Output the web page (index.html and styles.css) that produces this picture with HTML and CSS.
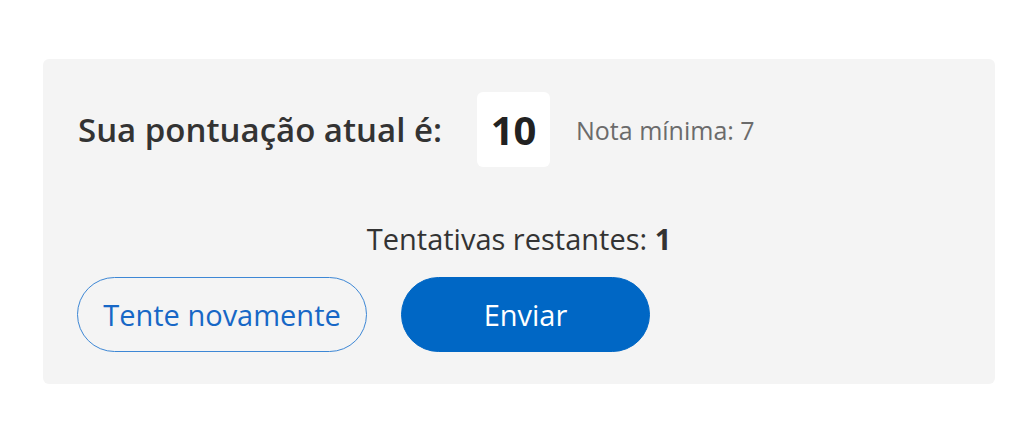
FILE: index.html
```html
<!DOCTYPE html>
<html lang="pt-BR">

<head>
    <meta charset="UTF-8">
    <meta name="viewport" content="width=device-width, initial-scale=1.0">
    <title>Resultado</title>
    <link rel="stylesheet" href="styles.css">
</head>

<body>
    <div class="result-panel">
        <div class="score-row">
            <span class="score-label">Sua pontuação atual é:</span>
            <span class="score-box">10</span>
            <span class="min-score">Nota mínima: 7</span>
        </div>

        <p class="attempts">Tentativas restantes: <strong>1</strong></p>

        <div class="actions">
            <button type="button" class="btn btn-outline">Tente novamente</button>
            <button type="submit" class="btn btn-primary">Enviar</button>
        </div>
    </div>
</body>

</html>
```

FILE: styles.css
```css
body {
    margin: 59px 36px 0 43px;
    font-family: "Open Sans", "Noto Sans", sans-serif;
    background-color: #ffffff;
    color: #333333;
}

.result-panel {
    background-color: #f4f4f4;
    border-radius: 6px;
    padding: 33px 34px 32px 34px;
}

.score-row {
    display: flex;
    align-items: center;
}

.score-label {
    font-size: 33px;
    font-weight: 600;
    color: #333333;
    margin-left: 1px;
}

.score-box {
    display: flex;
    justify-content: center;
    align-items: center;
    width: 73px;
    height: 75px;
    margin-left: 35px;
    background-color: #ffffff;
    border-radius: 6px;
    font-size: 40px;
    font-weight: 700;
    color: #222222;
}

.min-score {
    margin-left: 26px;
    font-size: 25px;
    color: #6b6b6b;
}

.attempts {
    margin: 52px 0 18px 0;
    text-align: center;
    font-size: 29px;
    line-height: 40px;
    color: #333333;
}

.attempts strong {
    font-weight: 700;
}

.actions {
    display: flex;
    gap: 34px;
}

.btn {
    height: 75px;
    border-radius: 38px;
    font-family: inherit;
    font-size: 29px;
    cursor: pointer;
}

.btn-outline {
    width: 290px;
    background-color: transparent;
    border: 1px solid #3d87d5;
    color: #1767c6;
}

.btn-primary {
    width: 249px;
    background-color: #0067c5;
    border: 1px solid #0067c5;
    color: #ffffff;
}
```
